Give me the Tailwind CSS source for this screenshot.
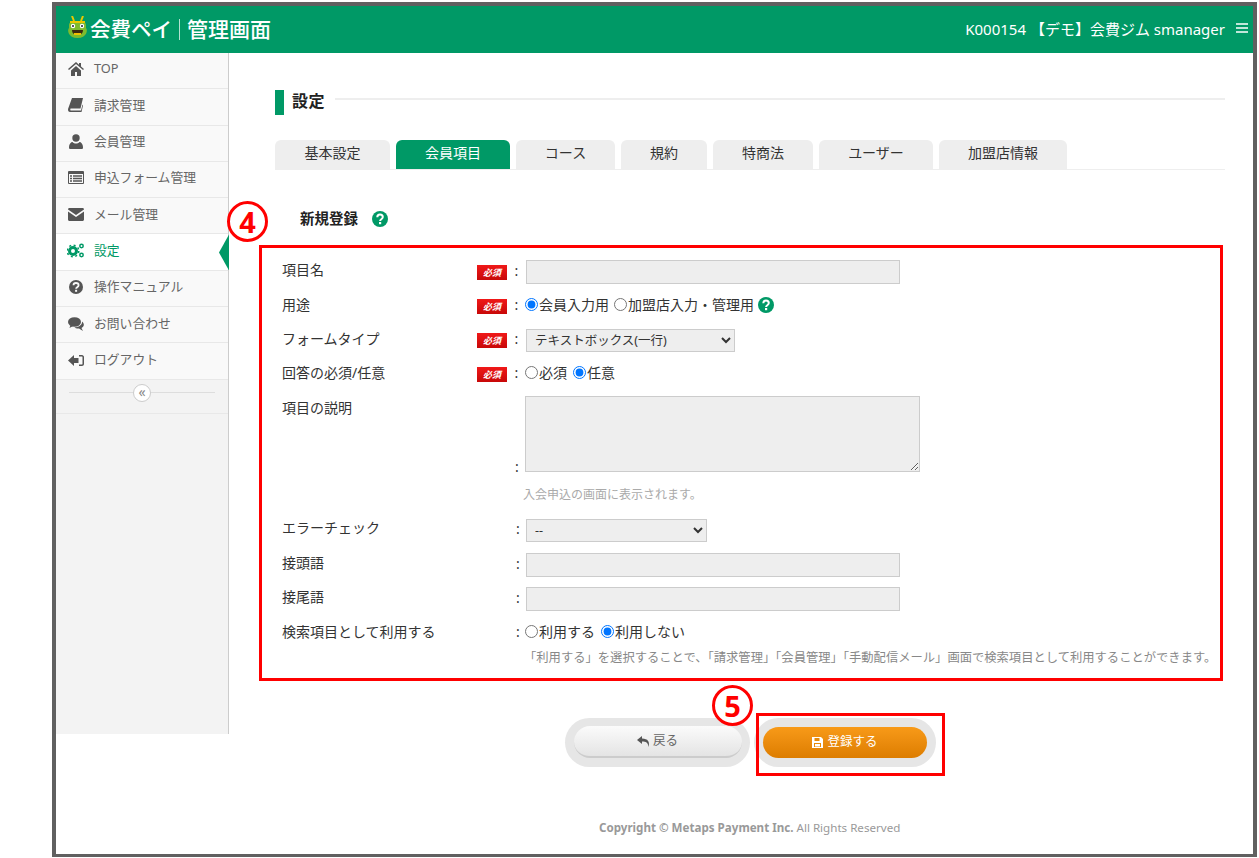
<!DOCTYPE html>
<html lang="ja">
<head>
<meta charset="UTF-8">
<title>会費ペイ 管理画面</title>
<script src="https://cdn.jsdelivr.net/npm/@tailwindcss/browser@4"></script>
</head>
<body class="bg-white font-['Noto_Sans','Noto_Sans_CJK_JP',sans-serif] text-[#333]">
<div class="ml-[52px] mt-[2px] w-[1205px] h-[855px] border-4 border-b-[3px] border-[#606060] flex flex-col overflow-hidden relative">

  <!-- header -->
  <header class="h-[47px] bg-[#009966] flex items-center justify-between text-white shrink-0">
    <div class="flex items-center pl-[11px]">
      <svg class="w-[21px] h-[24px] mb-[3px]" viewBox="0 0 21 24">
        <path d="M5 0l2 5M16 0l-2 5" stroke="#e8c800" stroke-width="2" fill="none"/>
        <path d="M2 9c0-3 4-4 8.500-4s8.500 1 8.500 4v3c2 2 1 10-8.500 10S0 14 2 12z" fill="#7dbb2e"/>
        <rect x="3" y="5" width="15" height="2" fill="#e8c800"/>
        <circle cx="6" cy="10" r="2.200" fill="#fff"/><circle cx="15" cy="10" r="2.200" fill="#fff"/>
        <circle cx="6" cy="10" r="1" fill="#223"/><circle cx="15" cy="10" r="1" fill="#223"/>
        <path d="M5 14h11c0 4-3 5-5.500 5S5 18 5 14z" fill="#3a2a10"/>
        <rect x="7" y="17" width="7" height="2" fill="#f0c000"/>
      </svg>
      <span class="text-[20.500px] leading-none font-medium ml-[2px]">会費ペイ</span>
      <span class="w-px h-[21px] bg-white/70 mx-[7px]"></span>
      <span class="text-[21px] leading-none font-medium">管理画面</span>
    </div>
    <div class="flex items-center pr-[5px] text-[15px]">
      <span>K000154 【デモ】会費ジム smanager</span>
      <svg class="w-[12px] h-[10px] ml-[11px] mb-[3px]" viewBox="0 0 12 10"><path d="M0 1h12M0 5h12M0 9h12" stroke="#fff" stroke-width="1.300"/></svg>
    </div>
  </header>

  <div class="flex flex-1 min-h-0">
    <!-- sidebar -->
    <aside class="w-[173px] h-[681px] shrink-0 bg-[#f3f3f3] border-r border-[#ccc] text-[12.800px] text-[#666]">
      <ul>
        <li class="h-[36.300px] bg-[#f9f9f9] border-b border-[#e8e8e8] flex items-center pl-[12px] pb-[4px] gap-[10px]">
          <svg class="w-[16px] h-[14px]" viewBox="0 0 16 14" fill="#555"><path d="M8 0L0 7l1 1 7-6 7 6 1-1-3-2.600V1h-2v1.800zM3 8.500V14h4v-4h2v4h4V8.500L8 4z"/></svg>
          <span>TOP</span>
        </li>
        <li class="h-[36.300px] bg-[#f9f9f9] border-b border-[#e8e8e8] flex items-center pl-[12px] pb-[3px] gap-[10px]">
          <svg class="w-[16px] h-[14px]" viewBox="0 0 16 14" fill="#555"><path d="M4 0h11l-2.500 10.500H3c-1 0-1 2 0 2h10l1.500-6 .5 1-1.500 6.500H2c-2 0-2.200-2-1.800-3.500z"/></svg>
          <span>請求管理</span>
        </li>
        <li class="h-[36.300px] bg-[#f9f9f9] border-b border-[#e8e8e8] flex items-center pl-[12px] pb-[4px] gap-[10px]">
          <svg class="w-[16px] h-[15px]" viewBox="0 0 16 15" fill="#555"><circle cx="8" cy="4" r="3.700"/><path d="M2 15c-1 0-1-1-1-2 0-3 2-5 3.500-5 1 1 2.200 1.500 3.500 1.500S10.500 9 11.500 8c1.500 0 3.500 2 3.500 5 0 1 0 2-1 2z"/></svg>
          <span>会員管理</span>
        </li>
        <li class="h-[36.300px] bg-[#f9f9f9] border-b border-[#e8e8e8] flex items-center pl-[12px] pb-[4px] gap-[10px]">
          <svg class="w-[16px] h-[13px]" viewBox="0 0 16 13"><rect width="16" height="13" rx="1" fill="#555"/><rect x="1" y="3" width="14" height="9" fill="#f9f9f9"/><path d="M2 5h2M2 7.500h2M2 10h2M5 5h9M5 7.500h9M5 10h9" stroke="#555" stroke-width="1.300"/></svg>
          <span>申込フォーム管理</span>
        </li>
        <li class="h-[36.300px] bg-[#f9f9f9] border-b border-[#e8e8e8] flex items-center pl-[12px] pb-[2px] gap-[10px]">
          <svg class="w-[16px] h-[13px]" viewBox="0 0 16 13" fill="#555"><path d="M1.500 0h13C15.500 0 16 .7 16 1.500L8 7 0 1.500C0 .7.500 0 1.500 0zM0 3.500l8 5.500 8-5.500v8c0 .8-.7 1.500-1.500 1.500h-13C.7 13 0 12.300 0 11.500z"/></svg>
          <span>メール管理</span>
        </li>
        <li class="h-[36.300px] bg-white border-b border-[#e8e8e8] flex items-center pl-[11px] pb-[4px] gap-[9px] text-[#009966] relative">
          <svg class="w-[18px] h-[15px]" viewBox="0 0 18 15" fill="none" stroke="#009966">
            <circle cx="6" cy="8" r="3.500" stroke-width="3"/>
            <circle cx="6" cy="8" r="5.800" stroke-width="1.500" stroke-dasharray="2 2.550"/>
            <circle cx="14.500" cy="3" r="1.700" stroke-width="1.500"/>
            <circle cx="14.500" cy="12" r="1.700" stroke-width="1.500"/>
          </svg>
          <span>設定</span>
          <span class="absolute right-[-1px] top-0 h-[36px] w-[10px] bg-[#009966] [clip-path:polygon(100%_0,100%_100%,0_50%)]"></span>
        </li>
        <li class="h-[36.300px] bg-[#f9f9f9] border-b border-[#e8e8e8] flex items-center pl-[12px] pb-[3px] gap-[10px]">
          <svg class="w-[16px] h-[16px]" viewBox="0 0 16 16"><circle cx="8" cy="8" r="7" fill="#555"/><path d="M5.500 6.300C5.500 4.800 6.700 4 8 4s2.600.8 2.600 2.200c0 2-2.500 2-2.500 3.500" stroke="#f9f9f9" stroke-width="1.800" fill="none"/><rect x="7.100" y="10.800" width="2" height="2" fill="#f9f9f9"/></svg>
          <span>操作マニュアル</span>
        </li>
        <li class="h-[36.300px] bg-[#f9f9f9] border-b border-[#e8e8e8] flex items-center pl-[12px] pb-[2px] gap-[10px]">
          <svg class="w-[16px] h-[14px]" viewBox="0 0 16 14" fill="#555"><ellipse cx="6.500" cy="5" rx="6.500" ry="4.800"/><path d="M2.500 8l-1 3 3.500-2z"/><path d="M14 4.500c2.500 2 2.500 5-.5 6.500l1.500 3-4-2.500c-2 .2-3.500-.3-4.500-1 4 0 8-2.500 7.500-6z"/></svg>
          <span>お問い合わせ</span>
        </li>
        <li class="h-[36.300px] bg-[#f9f9f9] border-b border-[#e8e8e8] flex items-center pl-[12px] pb-[2px] gap-[10px]">
          <svg class="w-[16px] h-[13px]" viewBox="0 0 16 13" fill="#555"><path d="M0 6.500L6 1v3h4.500v5H6v3z"/><path d="M11 1h3c1 0 2 1 2 2v7c0 1-1 2-2 2h-3v-1.500h3c.3 0 .5-.2.500-.5V3c0-.3-.2-.5-.5-.5h-3z"/></svg>
          <span>ログアウト</span>
        </li>
      </ul>
      <div class="h-[34px] border-b border-[#e8e8e8] flex items-center justify-center relative">
        <span class="absolute left-[13px] right-[13px] top-[12px] h-px bg-[#ddd]"></span>
        <span class="relative w-[18px] h-[18px] mb-[7px] rounded-full bg-white border border-[#ccc] flex items-center justify-center text-[14px] leading-none pb-[2px] text-[#888]">«</span>
      </div>
    </aside>

    <!-- main -->
    <main class="flex-1 min-w-0 relative">
      <div class="flex items-start pl-[46px] pr-[28px] pt-[37px]">
        <span class="w-[9px] h-[25px] bg-[#009966]"></span>
        <h1 class="text-[16px] leading-[22px] font-bold text-[#222] ml-[8px] tracking-[0.5px]">設定</h1>
        <span class="flex-1 h-[2px] bg-[#eee] ml-[10px] mt-[8px]"></span>
      </div>

      <nav class="mt-[25px] mx-[46px] mr-[28px] flex gap-[6px] border-b border-[#eee] h-[30px] text-[14px] text-[#333]">
        <a class="w-[115px] rounded-t-[6px] bg-[#eee] flex items-center justify-center pb-[4px]">基本設定</a>
        <a class="w-[114px] rounded-t-[6px] bg-[#009966] text-white flex items-center justify-center pb-[4px]">会員項目</a>
        <a class="w-[99px] rounded-t-[6px] bg-[#eee] flex items-center justify-center pb-[4px]">コース</a>
        <a class="w-[86px] rounded-t-[6px] bg-[#eee] flex items-center justify-center pb-[4px]">規約</a>
        <a class="w-[100px] rounded-t-[6px] bg-[#eee] flex items-center justify-center pb-[4px]">特商法</a>
        <a class="w-[114px] rounded-t-[6px] bg-[#eee] flex items-center justify-center pb-[4px]">ユーザー</a>
        <a class="w-[128px] rounded-t-[6px] bg-[#eee] flex items-center justify-center pb-[4px]">加盟店情報</a>
      </nav>

      <div class="flex items-center mt-[38px] ml-[71px] h-[22px]">
        <h2 class="text-[14.500px] font-bold text-[#222]">新規登録</h2>
        <svg class="w-[16px] h-[16px] ml-[14px]" viewBox="0 0 16 16"><circle cx="8" cy="8" r="8" fill="#009966"/><path d="M5.300 6.200C5.300 4.500 6.700 3.600 8 3.600s2.800.9 2.800 2.500c0 2.200-2.700 2.100-2.700 3.800" stroke="#fff" stroke-width="2" fill="none"/><rect x="7" y="11" width="2.200" height="2.200" fill="#fff"/></svg>
      </div>

      <!-- form -->
      <section class="mt-[15px] ml-[30px] w-[964px] h-[436px] border-[3px] border-[#ff0000] text-[14px] pt-[12px]">
        <div class="flex items-center h-[24px]">
          <label class="w-[215px] pl-[20px] pb-[6px]">項目名</label>
          <span class="w-[30px] h-[15px] bg-gradient-to-b from-[#f01818] to-[#c80808] text-white text-[9px] font-bold italic flex items-center justify-center leading-none">必須</span>
          <span class="w-[19px] text-center pb-[4px]">:</span>
          <input type="text" class="w-[374px] h-[24px] bg-[#eee] border border-[#ccc]">
        </div>
        <div class="flex items-center h-[24px] mt-[10.500px]">
          <label class="w-[215px] pl-[20px] pb-[4px]">用途</label>
          <span class="w-[30px] h-[15px] bg-gradient-to-b from-[#f01818] to-[#c80808] text-white text-[9px] font-bold italic flex items-center justify-center leading-none">必須</span>
          <span class="w-[19px] text-center pb-[4px]">:</span>
          <div class="flex items-center pb-[4px] -ml-px">
            <input type="radio" name="use" checked class="w-[13px] h-[13px] m-0"><span class="ml-px">会員入力用</span>
            <input type="radio" name="use" class="w-[13px] h-[13px] ml-[5px]"><span class="ml-px">加盟店入力・管理用</span>
            <svg class="w-[16px] h-[16px] ml-[4px]" viewBox="0 0 16 16"><circle cx="8" cy="8" r="8" fill="#009966"/><path d="M5.300 6.200C5.300 4.500 6.700 3.600 8 3.600s2.800.9 2.800 2.500c0 2.200-2.700 2.100-2.700 3.800" stroke="#fff" stroke-width="2" fill="none"/><rect x="7" y="11" width="2.200" height="2.200" fill="#fff"/></svg>
          </div>
        </div>
        <div class="flex items-center h-[24px] mt-[10px]">
          <label class="w-[215px] pl-[20px] pb-[4px]">フォームタイプ</label>
          <span class="w-[30px] h-[15px] bg-gradient-to-b from-[#f01818] to-[#c80808] text-white text-[9px] font-bold italic flex items-center justify-center leading-none">必須</span>
          <span class="w-[19px] text-center pb-[4px]">:</span>
          <select class="w-[209px] h-[23px] bg-[#eee] border border-[#ccc] text-[12.500px] pl-[4px]"><option>テキストボックス(一行)</option></select>
        </div>
        <div class="flex items-center h-[24px] mt-[10px]">
          <label class="w-[215px] pl-[20px] pb-[4px]">回答の必須/任意</label>
          <span class="w-[30px] h-[15px] bg-gradient-to-b from-[#f01818] to-[#c80808] text-white text-[9px] font-bold italic flex items-center justify-center leading-none">必須</span>
          <span class="w-[19px] text-center pb-[4px]">:</span>
          <div class="flex items-center pb-[4px] -ml-px">
            <input type="radio" name="req" class="w-[13px] h-[13px] m-0"><span class="ml-px">必須</span>
            <input type="radio" name="req" checked class="w-[13px] h-[13px] ml-[6px]"><span class="ml-px">任意</span>
          </div>
        </div>
        <div class="flex mt-[9.500px] h-[76px]">
          <label class="w-[263px] pl-[20px] pt-[1px]">項目の説明</label>
          <span class="self-end w-0 -ml-[10px] mr-[10px] -mb-[5px]">:</span>
          <textarea class="w-[395px] h-[76px] bg-[#eee] border border-[#ccc] shrink-0"></textarea>
        </div>
        <p class="ml-[261px] mt-[14px] h-[18px] text-[12px] leading-[18px] text-[#aaa]">入会申込の画面に表示されます。</p>
        <div class="flex items-center h-[24px] mt-[14px]">
          <label class="w-[264px] pl-[20px] pb-[6px]">エラーチェック</label>
          <span class="w-0 -ml-[10px] mr-[10px] pb-[4px]">:</span>
          <select class="w-[181px] h-[23px] bg-[#eee] border border-[#ccc] text-[12.500px] pl-[4px]"><option>--</option></select>
        </div>
        <div class="flex items-center h-[24px] mt-[11px]">
          <label class="w-[264px] pl-[20px] pb-[6px]">接頭語</label>
          <span class="w-0 -ml-[10px] mr-[10px] pb-[4px]">:</span>
          <input type="text" class="w-[374px] h-[24px] bg-[#eee] border border-[#ccc]">
        </div>
        <div class="flex items-center h-[24px] mt-[10px]">
          <label class="w-[264px] pl-[20px] pb-[6px]">接尾語</label>
          <span class="w-0 -ml-[10px] mr-[10px] pb-[4px]">:</span>
          <input type="text" class="w-[374px] h-[24px] bg-[#eee] border border-[#ccc]">
        </div>
        <div class="flex items-center h-[24px] mt-[10px]">
          <label class="w-[264px] pl-[20px] pb-[4px]">検索項目として利用する</label>
          <span class="w-0 -ml-[10px] mr-[10px] pb-[4px]">:</span>
          <div class="flex items-center pb-[4px] -ml-px">
            <input type="radio" name="search" class="w-[13px] h-[13px] m-0"><span class="ml-px">利用する</span>
            <input type="radio" name="search" checked class="w-[13px] h-[13px] ml-[6px]"><span class="ml-px">利用しない</span>
          </div>
        </div>
        <p class="ml-[262px] mt-[4px] text-[12.300px] leading-[18px] text-[#888] whitespace-nowrap">「利用する」を選択することで、「請求管理」「会員管理」「手動配信メール」画面で検索項目として利用することができます。</p>
      </section>

      <!-- buttons -->
      <div class="flex ml-[336px] mt-[37px] gap-[4px] text-[12.500px]">
        <div class="w-[185px] h-[49px] rounded-full bg-[#e6e6e6] flex items-center justify-center">
          <button class="w-[168px] h-[32px] mb-px rounded-full bg-gradient-to-b from-[#fbfbfb] to-[#e4e4e4] border-b-2 border-[#ccc] text-[#666] flex items-center justify-center gap-[3px]">
            <svg class="w-[13px] h-[11px]" viewBox="0 0 13 11" fill="#555"><path d="M5 0L0 4l5 4V5.500c4 0 6 .8 6.500 5.500C13 6 11 2.500 5 2.500z"/></svg>戻る
          </button>
        </div>
        <div class="w-[182px] h-[49px] rounded-full bg-[#e6e6e6] flex items-center justify-center">
          <button class="w-[164px] h-[31px] mb-px rounded-full bg-gradient-to-b from-[#f89a18] to-[#dd7d00] text-white flex items-center justify-center gap-[4px]">
            <svg class="w-[11px] h-[11px]" viewBox="0 0 11 11"><path d="M0 0h9l2 2v9H0z" fill="#fff"/><rect x="2.500" y="1" width="5" height="3" fill="#e88a08"/><rect x="2" y="6" width="7" height="4" fill="#e88a08"/><rect x="3" y="7" width="5" height="2.500" fill="#fff"/></svg>登録する
          </button>
        </div>
      </div>

      <footer class="absolute left-[370px] top-[767px] text-[11.600px] leading-[16px] text-[#999] whitespace-nowrap"><b>Copyright © Metaps Payment Inc.</b> All Rights Reserved</footer>

      <!-- annotations -->
      <span class="absolute left-[-2px] top-[148px] w-[41px] h-[41px] rounded-full border-[3px] border-[#ff0000] bg-white flex items-center justify-center text-[#ff0000] text-[29px] font-bold leading-none">4</span>
      <span class="absolute left-[483px] top-[632px] w-[41px] h-[41px] rounded-full border-[3px] border-[#ff0000] bg-white flex items-center justify-center text-[#ff0000] text-[29px] font-bold leading-none">5</span>
      <span class="absolute left-[527px] top-[660px] w-[189px] h-[63px] border-[3px] border-[#ff0000]"></span>
    </main>
  </div>
</div>
</body>
</html>
